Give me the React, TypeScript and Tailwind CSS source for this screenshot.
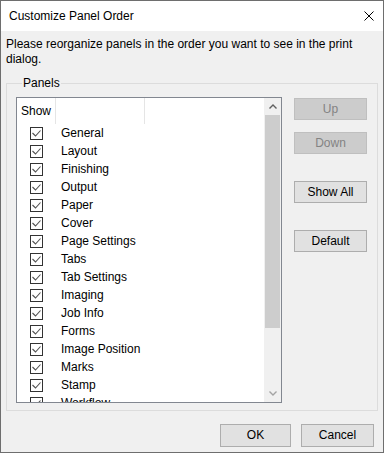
import React from "react";

const panels = [
  "General",
  "Layout",
  "Finishing",
  "Output",
  "Paper",
  "Cover",
  "Page Settings",
  "Tabs",
  "Tab Settings",
  "Imaging",
  "Job Info",
  "Forms",
  "Image Position",
  "Marks",
  "Stamp",
  "Workflow",
];

function CheckBox() {
  return (
    <span className="flex h-[13px] w-[13px] shrink-0 items-center justify-center border border-[#333333] bg-white">
      <svg width="11" height="11" viewBox="0 0 11 11" fill="none">
        <polyline points="1.5,5 4.5,8 9.5,2.5" stroke="#505050" strokeWidth="1.1" />
      </svg>
    </span>
  );
}

function WinButton({ label, disabled }: { label: string; disabled?: boolean }) {
  return (
    <button
      className={
        disabled
          ? "flex h-[22px] w-[73px] items-center justify-center border border-[#bfbfbf] bg-[#cccccc] text-[#838383]"
          : "flex h-[22px] w-[73px] items-center justify-center border border-[#adadad] bg-[#e1e1e1] text-black"
      }
    >
      {label}
    </button>
  );
}

export default function App() {
  return (
    <div
      className="flex h-[453px] w-[384px] flex-col border border-[#6e6e6e] bg-[#f0f0f0] text-[12px] leading-[15px] text-black"
      style={{ fontFamily: '"Liberation Sans", Arial, sans-serif' }}
    >
      {/* Title bar */}
      <div className="flex h-[30px] shrink-0 items-center justify-between bg-white pl-[8px] pr-[9px]">
        <span>Customize Panel Order</span>
        <svg width="10" height="10" viewBox="0 0 10 10">
          <path d="M0.5 0.5 L9.5 9.5 M9.5 0.5 L0.5 9.5" stroke="#000" strokeWidth="1" />
        </svg>
      </div>

      <div className="flex flex-1 flex-col px-[5px]">
        <p className="pt-[6px]">
          Please reorganize panels in the order you want to see in the print dialog.
        </p>

        <fieldset className="mt-[9px] border border-[#dcdcdc] pb-[7px] pl-[9px] pr-[10px] pt-[6px]">
          <legend className="ml-[6px] px-[1px]">Panels</legend>
          <div className="flex gap-[12px]">
            {/* List */}
            <div className="flex h-[306px] w-[266px] border border-[#828790] bg-white">
              <div className="flex flex-1 flex-col overflow-hidden">
                <div className="flex h-[26px] shrink-0">
                  <div className="flex w-[39px] items-center border-r border-[#e5e5e5] pl-[4px]">Show</div>
                  <div className="w-[89px] border-r border-[#e5e5e5]" />
                </div>
                {panels.map((p) => (
                  <div key={p} className="flex h-[18px] shrink-0 items-center pl-[13px]">
                    <CheckBox />
                    <span className="pl-[18px]">{p}</span>
                  </div>
                ))}
              </div>
              {/* Scrollbar */}
              <div className="flex w-[17px] shrink-0 flex-col bg-[#f0f0f0]">
                <div className="flex h-[17px] items-center justify-center">
                  <svg width="8" height="5" viewBox="0 0 8 5">
                    <path d="M0.5 4.5 L4 1 L7.5 4.5" stroke="#606060" strokeWidth="1.4" fill="none" />
                  </svg>
                </div>
                <div className="flex flex-1 flex-col px-[1px]">
                  <div className="h-[213px] bg-[#cdcdcd]" />
                </div>
                <div className="flex h-[17px] items-center justify-center">
                  <svg width="8" height="5" viewBox="0 0 8 5">
                    <path d="M0.5 0.5 L4 4 L7.5 0.5" stroke="#a3a3a3" strokeWidth="1.4" fill="none" />
                  </svg>
                </div>
              </div>
            </div>

            {/* Side buttons */}
            <div className="flex w-[73px] flex-col pt-[1px]">
              <WinButton label="Up" disabled />
              <div className="mt-[12px]">
                <WinButton label="Down" disabled />
              </div>
              <div className="mt-[27px]">
                <WinButton label="Show All" />
              </div>
              <div className="mt-[27px]">
                <WinButton label="Default" />
              </div>
            </div>
          </div>
        </fieldset>

        <div className="mt-[13px] flex justify-end gap-[10px] pr-[4px]">
          <button className="flex h-[23px] w-[71px] items-center justify-center border border-[#adadad] bg-[#e1e1e1]">
            OK
          </button>
          <button className="flex h-[23px] w-[73px] items-center justify-center border border-[#adadad] bg-[#e1e1e1]">
            Cancel
          </button>
        </div>
      </div>
    </div>
  );
}
